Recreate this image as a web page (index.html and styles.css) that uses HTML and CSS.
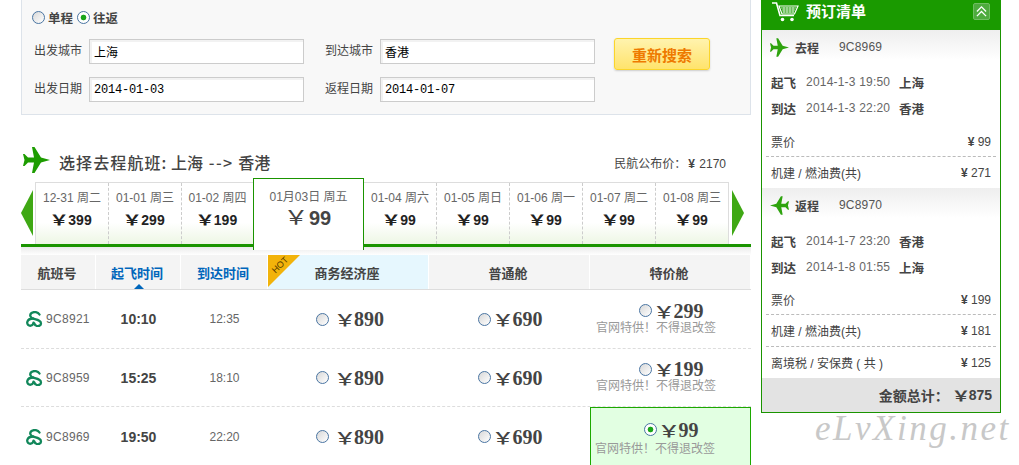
FILE: index.html
```html
<!DOCTYPE html>
<html lang="zh">
<head>
<meta charset="utf-8">
<title>预订</title>
<link rel="stylesheet" href="styles.css">
</head>
<body>
<svg class="defs" width="0" height="0">
  <defs>
    <symbol id="plane" viewBox="0 0 27 26"><path d="M9 0h2.500L18 10.500 27 13l-9 2.500L11.500 26H9l2-10.500H5L1.500 19H0l1.500-6L0 7h1.500L5 10.500h6z"/></symbol>
    <symbol id="swirl" viewBox="0 0 17 16"><g fill="none" stroke="#11875a" stroke-width="2.300" stroke-linecap="round"><path d="M13.500 3.500C12 1 8 .3 5.500 2 3 4 4.500 7 8 8c4 1 7 1.500 7 4.500 0 2-2.500 3-4.500 2.300-1.300-.5-2-1.500-2.200-2.500"/><path d="M7.500 7.500C5 7.500 2 8 1.300 11c-.5 2.500 1.500 4 3.500 3.700 1.500-.2 2.500-1.500 2.700-3"/></g></symbol>
  </defs>
</svg>
<div class="page">
  <main class="main">
    <section class="search">
      <div class="trip">
        <span class="radio"></span><b>单程</b>
        <span class="radio on"></span><b>往返</b>
      </div>
      <div class="form">
        <label class="lab">出发城市</label><input class="field" value="上海" readonly>
        <label class="lab lab2">到达城市</label><input class="field" value="香港" readonly>
        <button class="again" type="button">重新搜索</button>
        <label class="lab">出发日期</label><input class="field mono" value="2014-01-03" readonly>
        <label class="lab lab2">返程日期</label><input class="field mono" value="2014-01-07" readonly>
      </div>
    </section>

    <div class="title">
      <svg class="bigplane"><use href="#plane"/></svg>
      <h2><span class="wide1">选择去程航班:</span> 上海 <span class="wide2">--&gt;</span> 香港</h2>
      <div class="pub">民航公布价：<b>¥</b> 2170</div>
    </div>

    <div class="tabbar">
      <span class="arrow left"></span>
      <div class="tabs">
        <div class="tab"><span>12-31 周二</span><b><i>&#xFFE5;</i>399</b></div>
        <div class="tab"><span>01-01 周三</span><b><i>&#xFFE5;</i>299</b></div>
        <div class="tab nob short"><span>01-02 周四</span><b><i>&#xFFE5;</i>199</b></div>
        <div class="tab sel"><span>01月03日 周五</span><b><i>&#xFFE5;</i>99</b></div>
        <div class="tab"><span>01-04 周六</span><b><i>&#xFFE5;</i>99</b></div>
        <div class="tab"><span>01-05 周日</span><b><i>&#xFFE5;</i>99</b></div>
        <div class="tab"><span>01-06 周一</span><b><i>&#xFFE5;</i>99</b></div>
        <div class="tab"><span>01-07 周二</span><b><i>&#xFFE5;</i>99</b></div>
        <div class="tab nob"><span>01-08 周三</span><b><i>&#xFFE5;</i>99</b></div>
      </div>
      <span class="arrow right"></span>
    </div>
    <div class="shade"></div>

    <div class="thead">
      <div>航班号</div>
      <div class="blue sorted">起飞时间</div>
      <div class="blue">到达时间</div>
      <div class="biz"><span class="hot"><em>HOT</em></span>商务经济座</div>
      <div>普通舱</div>
      <div>特价舱</div>
    </div>

    <div class="row r1">
      <div class="fno"><svg class="swirl"><use href="#swirl"/></svg>9C8921</div>
      <div class="dep">10:10</div>
      <div class="arr">12:35</div>
      <div class="fare bizfare"><span class="radio"></span><span class="yuan">&#xFFE5;</span><span class="amt">890</span></div>
      <div class="fare"><span class="radio"></span><span class="yuan">&#xFFE5;</span><span class="amt">690</span></div>
      <div class="special">
        <div class="fare"><span class="radio"></span><span class="yuan">&#xFFE5;</span><span class="amt">299</span></div>
        <p>官网特供！不得退改签</p>
      </div>
    </div>
    <div class="row r2">
      <div class="fno"><svg class="swirl"><use href="#swirl"/></svg>9C8959</div>
      <div class="dep">15:25</div>
      <div class="arr">18:10</div>
      <div class="fare bizfare"><span class="radio"></span><span class="yuan">&#xFFE5;</span><span class="amt">890</span></div>
      <div class="fare"><span class="radio"></span><span class="yuan">&#xFFE5;</span><span class="amt">690</span></div>
      <div class="special">
        <div class="fare"><span class="radio"></span><span class="yuan">&#xFFE5;</span><span class="amt">199</span></div>
        <p>官网特供！不得退改签</p>
      </div>
    </div>
    <div class="row r3">
      <div class="fno"><svg class="swirl"><use href="#swirl"/></svg>9C8969</div>
      <div class="dep">19:50</div>
      <div class="arr">22:20</div>
      <div class="fare bizfare"><span class="radio"></span><span class="yuan">&#xFFE5;</span><span class="amt">890</span></div>
      <div class="fare"><span class="radio"></span><span class="yuan">&#xFFE5;</span><span class="amt">690</span></div>
      <div class="special chosen">
        <div class="fare"><span class="radio on"></span><span class="yuan">&#xFFE5;</span><span class="amt">99</span></div>
        <p>官网特供！不得退改签</p>
      </div>
    </div>
  </main>

  <aside class="side">
    <div class="box">
      <header class="shead">
        <svg class="cart" viewBox="0 0 27 20"><path d="M0 1h4.500l3.500 12.500h14" fill="none" stroke="#fff" stroke-width="1.600"/><path d="M7 4h19l-3.500 8H10z" fill="none" stroke="#fff" stroke-width="1.200"/><path d="M9 6h15M10 8h13M10.500 10h11.500M12 5v6M15 5v6M18 5v6M21 5v6" stroke="#fff" stroke-width=".7"/><circle cx="10.500" cy="17.500" r="1.800" fill="#fff"/><circle cx="20" cy="17.500" r="1.800" fill="#fff"/></svg>
        <h3>预订清单</h3>
        <span class="collapse"><svg viewBox="0 0 12 12"><path d="M1 6l5-5 5 5M1 11l5-5 5 5" fill="none" stroke="#fff" stroke-width="1.400"/></svg></span>
      </header>

      <div class="leg">
        <svg class="lplane"><use href="#plane"/></svg><b>去程</b><span class="code">9C8969</span>
      </div>
      <div class="stops s1">
        <div><b>起飞</b><span>2014-1-3 19:50</span><b>上海</b></div>
        <div><b>到达</b><span>2014-1-3 22:20</span><b>香港</b></div>
      </div>
      <div class="cost"><span>票价</span><b>¥ <u>99</u></b></div>
      <div class="cost dash"><span>机建 / 燃油费(共)</span><b>¥ <u>271</u></b></div>

      <div class="leg">
        <svg class="lplane flip"><use href="#plane"/></svg><b>返程</b><span class="code">9C8970</span>
      </div>
      <div class="stops s2">
        <div><b>起飞</b><span>2014-1-7 23:20</span><b>香港</b></div>
        <div><b>到达</b><span>2014-1-8 01:55</span><b>上海</b></div>
      </div>
      <div class="cost"><span>票价</span><b>¥ <u>199</u></b></div>
      <div class="cost dash"><span>机建 / 燃油费(共)</span><b>¥ <u>181</u></b></div>
      <div class="cost dash"><span>离境税 / 安保费 ( 共 )</span><b>¥ <u>125</u></b></div>

      <div class="total">金额总计：<i>&#xFFE5;</i><strong>875</strong></div>
    </div>
  </aside>
  <div class="mark">eLvXing.net</div>
</div>
</body>
</html>
```

FILE: styles.css
```css
* { box-sizing: border-box; }
html, body { margin: 0; padding: 0; background: #fff; }
body { font: 12px "Liberation Sans", "Noto Sans CJK SC", sans-serif; color: #444; overflow: hidden; }
.defs { position: absolute; }
.page { position: relative; display: flex; gap: 10px; width: 1019px; height: 465px; padding-left: 21px; overflow: hidden; }
.main { width: 730px; flex: none; }

.radio { display: inline-block; flex: none; width: 13px; height: 13px; border: 1px solid #4a75a2; border-radius: 50%; background: linear-gradient(135deg, #d8d8d8, #fff); }
.radio.on { background: radial-gradient(circle, #1aa51a 0 2.500px, #fff 3.200px); }

.search { height: 115px; background: #f8f8f8; border: 1px solid #dde3ea; border-top: 0; padding: 10px 0 0 12px; }
.trip { display: flex; align-items: center; height: 14px; margin-left: -2px; color: #444; }
.trip b { margin: 0 4px 0 3px; font-weight: 700; font-size: 12.500px; }
.form { display: grid; grid-template-columns: 55px 215px 76px 215px 1fr; grid-template-rows: 25px 25px; row-gap: 13px; margin-top: 15px; align-items: center; }
.lab { color: #444; line-height: 25px; }
.lab2 { padding-left: 21px; }
.field { width: 215px; height: 25px; border: 1px solid #ccc; background: #fff; box-shadow: inset 2px 2px 0 #f2f2f2; padding: 0 0 0 4px; font: 12px "Liberation Sans", "Noto Sans CJK SC", sans-serif; color: #000; outline: 0; }
.mono { font: 12px "Liberation Mono", monospace; letter-spacing: -.2px; }
.again { align-self: start; grid-row: 1 / 3; grid-column: 5; width: 96px; height: 32px; margin: -1px 0 0 19px; border: 1px solid #fbd52a; border-radius: 3px; background: linear-gradient(#fff3ae, #ffe36c); box-shadow: 0 1px 2px #ccc; color: #ee7a00; font: 700 15px "Noto Sans CJK SC", sans-serif; padding: 0; }

.title { display: flex; align-items: center; height: 26px; margin: 32px 0 9px; padding: 0 25px 0 2px; }
.bigplane { width: 27px; height: 26px; fill: #1d9c00; flex: none; }
.title h2 { margin: 3px 0 0 9px; font: 500 16px "Noto Sans CJK SC", sans-serif; color: #444; flex: 1; white-space: nowrap; }
.wide1 { letter-spacing: 1.100px; }
.wide2 { letter-spacing: 1.500px; margin: 0 1px 0 2px; }
.pub { align-self: flex-end; color: #444; line-height: 16px; font-size: 12px; margin-bottom: 1px; word-spacing: 1px; }
.pub b { font-weight: 700; margin-left: 2px; }

.tabbar { display: flex; height: 65px; border-bottom: 3px solid #1a9400; align-items: flex-start; }
.arrow { flex: none; width: 0; height: 0; margin-top: 8px; border-top: 23px solid transparent; border-bottom: 23px solid transparent; }
.arrow.left { border-right: 12px solid #3fa814; margin-right: 2px; }
.arrow.right { border-left: 12px solid #3fa814; margin-left: 3px; }
.tabs { display: flex; width: 694px; height: 62px; border: 1px solid #ddd; border-bottom: 0; background: linear-gradient(#fff 65%, #edf6e4); }
.tab { width: 73px; flex: none; height: 61px; border-right: 1px dashed #ccc; display: flex; flex-direction: column; align-items: center; color: #666; padding-top: 7px; }
.tab.nob { border-right: 0; width: 72px; }
.tab.short { width: 71px; }
.tab span { line-height: 16px; white-space: nowrap; }
.tab b { color: #222; font-size: 14px; line-height: 20px; margin-top: 3px; white-space: nowrap; }
.tab b i { display: inline-block; font: 700 14px "Noto Sans CJK SC", sans-serif; margin-right: 2px; transform: scaleX(1.4); }
.tab.sel { width: 111px; height: 72px; margin-top: -5px; position: relative; z-index: 1; background: #fff; border: 1px solid #1a9400; border-bottom: 0; padding-top: 10px; }
.tab.sel b { font-size: 20px; line-height: 26px; margin-top: -3px; color: #444; font-weight: 700; }
.tab.sel b i { font: 400 20px "Noto Sans CJK SC", sans-serif; margin-right: 3px; transform: scaleX(1.25); }
.shade { height: 8px; background: linear-gradient(#eaeaea, #fff); }

.thead { display: grid; grid-template-columns: 75px 85px 87px 161px 161px 161px; height: 35px; border-bottom: 1px solid #ddd; font: 700 13px "Noto Sans CJK SC", sans-serif; color: #444; }
.thead > div { position: relative; background: #f4f4f4; display: flex; align-items: center; justify-content: center; border-right: 1px solid #fff; padding-right: 2px; }
.thead .blue { color: #0066bb; }
.thead .biz { background: #e6f7fe; }
.sorted::after { content: ""; position: absolute; left: 38px; bottom: 0; border: 5px solid transparent; border-top: 0; border-bottom-color: #0066bb; }
.hot { position: absolute; left: 0; top: 0; width: 0; height: 0; border-top: 32px solid #f2b30a; border-right: 32px solid transparent; }
.hot em { position: absolute; left: 0; top: -28px; width: 24px; font: 9px/12px "Liberation Sans", sans-serif; color: #553a00; transform: rotate(-45deg); text-align: center; }

.row { display: grid; grid-template-columns: 75px 85px 87px 161px 161px 161px; align-items: center; border-bottom: 1px dashed #ddd; }
.r1 { height: 59px; }
.r2 { height: 58px; }
.r3 { height: 59px; border-bottom: 0; }
.fno { display: flex; align-items: center; padding-left: 5px; color: #666; letter-spacing: .3px; }
.swirl { width: 17px; height: 16px; margin-right: 3px; flex: none; }
.dep { text-align: center; font-weight: 700; font-size: 14px; color: #444; }
.arr { text-align: center; color: #666; }
.fare { display: flex; align-items: center; justify-content: center; padding-left: 2px; }
.yuan { display: inline-block; font: 500 16px/20px "Noto Sans CJK SC", sans-serif; margin-left: 4px; margin-right: 1px; color: #444; transform: scaleX(1.4); }
.bizfare { padding-left: 3px; }
.bizfare .yuan { margin-left: 8px; }
.amt { font: 700 20px/20px "Liberation Serif", serif; color: #444; }
.special { display: flex; flex-direction: column; align-self: stretch; justify-content: center; padding-bottom: 2px; }
.special p { margin: 0; padding-left: 6px; color: #999; font-size: 12px; line-height: 15px; white-space: nowrap; }
.chosen { height: 59px; border: 1px solid #1ca800; background: #e2ffe2; padding: 3px 0 0; }
.chosen p { padding-left: 4px; margin-top: 2px; }

.side { width: 240px; flex: none; }
.box { width: 240px; height: 413px; border: 1px solid #1a9400; border-top: 0; }
.shead { display: flex; align-items: center; height: 30px; margin: 0 -1px; background: #1a9a00; padding: 0 11px 7px 11px; color: #fff; }
.cart { width: 27px; height: 20px; flex: none; }
.shead h3 { margin: 0 0 2px 7px; flex: 1; font: 700 15px "Noto Sans CJK SC", sans-serif; }
.collapse { display: flex; width: 17px; height: 17px; background: #4eab3e; border: 1px solid #6fbd60; border-radius: 2px; padding: 2px; }
.collapse svg { width: 11px; height: 11px; }
.leg { display: flex; align-items: center; height: 30px; padding: 4px 0 0 8px; background: linear-gradient(#eeeeee, #fff); color: #444; }
.leg b { margin-left: 6px; width: 44px; font-weight: 700; }
.code { color: #555; letter-spacing: .2px; }
.lplane { width: 19px; height: 19px; fill: #2ea30e; flex: none; }
.flip { transform: scaleX(-1); }
.stops { padding: 9px 0 0 9px; height: 67px; }
.s2 { padding-top: 10px; }
.stops div { display: flex; height: 26px; align-items: center; }
.stops b { font-weight: 700; font-size: 12.500px; color: #444; }
.stops span { width: 93px; margin-left: 10px; color: #666; white-space: nowrap; letter-spacing: .2px; }
.cost { display: flex; justify-content: space-between; align-items: center; height: 29px; margin: 0 4px; padding: 0 5px; color: #444; }
.cost.dash { height: 32px; border-top: 1px dashed #bbb; }
.cost b { font-weight: 700; }
.cost u { text-decoration: none; font-weight: 400; color: #444; }
.total { display: flex; justify-content: flex-end; align-items: center; height: 34px; background: #e3e3e3; padding-right: 8px; font: 700 14px "Noto Sans CJK SC", sans-serif; color: #444; }
.total i { display: inline-block; font-style: normal; margin: 0 1px 0 5px; transform: scaleX(1.35); }
.total strong { font: 700 14px "Liberation Sans", sans-serif; }

.mark { position: absolute; left: 815px; top: 409px; font: italic 400 35px/40px "Liberation Serif", serif; letter-spacing: 2.500px; color: #c8c8c8; white-space: nowrap; }
```
